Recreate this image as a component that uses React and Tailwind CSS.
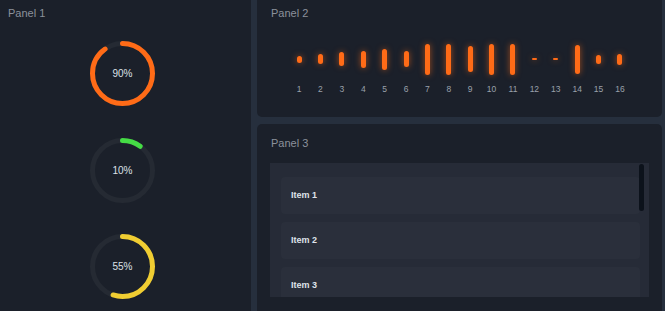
import React from 'react';

const gauges = [
  { value: 90, color: '#ff6b17' },
  { value: 10, color: '#45dc45' },
  { value: 55, color: '#f0cd32' },
];

const bars = [7, 10, 14, 17, 21, 16, 31, 31, 26, 31, 31, 2, 2, 29, 9, 11];

const Gauge = ({ value, color }) => {
  const r = 30;
  const c = 2 * Math.PI * r;
  return (
    <div className="relative w-[65px] h-[65px]">
      <svg width="65" height="65" viewBox="0 0 65 65" className="-rotate-90">
        <circle cx="32.5" cy="32.5" r={r} fill="none" stroke="#252a33" strokeWidth="5" />
        <circle
          cx="32.5"
          cy="32.5"
          r={r}
          fill="none"
          stroke={color}
          strokeWidth="5"
          strokeLinecap="round"
          strokeDasharray={`${(c * value) / 100} ${c}`}
        />
      </svg>
      <div className="absolute inset-0 flex items-center justify-center text-[10px] text-[#dde1e7]">
        {value}%
      </div>
    </div>
  );
};

const Title = ({ children }) => (
  <div className="text-[11px] leading-[14px] text-[#8b919b]">{children}</div>
);

export default function App() {
  return (
    <div className="w-[665px] h-[311px] overflow-hidden bg-[#262f3d] flex font-['Liberation_Sans',Arial,sans-serif]">
      <div className="w-[251px] h-full bg-[#1b202a] pl-2 pt-[6px] flex flex-col">
        <Title>Panel 1</Title>
        <div className="w-[245px] -ml-2 mt-[21px] flex flex-col items-center gap-[31.5px]">
          {gauges.map((g) => (
            <Gauge key={g.value} value={g.value} color={g.color} />
          ))}
        </div>
      </div>

      <div className="flex-1 min-h-0 ml-[6px] mr-[3px] flex flex-col gap-[7px]">
        <div className="h-[117px] shrink-0 bg-[#1b202a] rounded-b-[5px] px-[14px] pt-[6px]">
          <Title>Panel 2</Title>
          <div className="mt-[23.5px] flex justify-center">
            {bars.map((h, i) => (
              <div key={i} className="w-[21.4px] flex flex-col items-center">
                <div className="h-[31px] flex items-center">
                  <div
                    className="w-[5px] rounded-full bg-[#ff6b17] shadow-[0_0_6px_rgba(255,107,23,0.6)]"
                    style={{ height: h }}
                  />
                </div>
                <div className="mt-[9px] text-[8.5px] leading-[10px] text-[#9aa0aa]">{i + 1}</div>
              </div>
            ))}
          </div>
        </div>

        <div className="flex-1 min-h-0 bg-[#1b202a] rounded-t-[5px] px-[13px] pt-[12px] pb-[14px] flex flex-col">
          <div className="pl-[1px]">
            <Title>Panel 3</Title>
          </div>
          <div className="relative mt-[13px] flex-1 min-h-0 bg-[#262b37] overflow-hidden pt-[14px] pl-[11px] pr-[9px] flex flex-col gap-[8px]">
            {['Item 1', 'Item 2', 'Item 3'].map((t) => (
              <div
                key={t}
                className="h-[37px] shrink-0 rounded-[4px] bg-[#2a2f3b] pl-[10px] flex items-center text-[9px] font-bold text-[#dfe3ea]"
              >
                {t}
              </div>
            ))}
            <div className="absolute right-[5px] top-[1px] w-[5px] h-[47px] rounded-full bg-[#0c121b]" />
          </div>
        </div>
      </div>
    </div>
  );
}
